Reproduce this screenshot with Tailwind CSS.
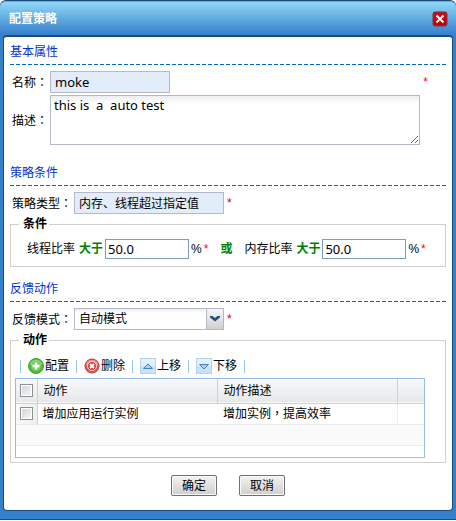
<!DOCTYPE html>
<html lang="zh-CN">
<head>
  <meta charset="UTF-8" />
  <meta name="viewport" content="width=device-width, initial-scale=1.0"/>
  <title>配置策略</title>
  <script src="https://cdn.jsdelivr.net/npm/@tailwindcss/browser@4"></script>
</head>
<body class="bg-white text-black text-xs leading-4 font-['Noto_Sans','Noto_Sans_CJK_SC',sans-serif]">

  <div class="bg-[#3580cb] border-y border-[#1a4b7c] rounded-t-md">
    <!-- Title bar -->
    <header class="flex items-center justify-between h-[34px] pl-[9px] pr-2 rounded-t-md border-t border-[#6fa9d8] bg-linear-to-b from-[#90d8f6] to-[#347fcb]">
      <h1 class="text-white font-bold">配置策略</h1>
      <button type="button" aria-label="关闭" class="block">
        <svg class="block" width="16" height="16" viewBox="0 0 16 16">
          <rect x="1" y="1" width="14" height="14" rx="2" fill="#d60610" stroke="#6a3f3c"/>
          <path d="M2 8h12v5a1.500 1.500 0 0 1-1 1H3a1.500 1.500 0 0 1-1-1z" fill="#c00008"/>
          <path d="M4.500 4.500l7 7M11.500 4.500l-7 7" stroke="#fff" stroke-width="2"/>
        </svg>
      </button>
    </header>

    <main class="mx-[3px] mb-2 px-1.5 pt-[7px] pb-3.5 bg-white border border-t-2 border-[#1a4b7c] rounded">
      <form>
        <!-- Basic properties -->
        <h2 class="text-[#0033cc] h-5">基本属性</h2>
        <div class="h-px bg-[repeating-linear-gradient(90deg,#0066c4_0_4px,transparent_4px_6px)]"></div>
        <div class="flex items-center mt-1.5 pl-0.5">
          <label for="name" class="w-[38px] shrink-0">名称<span lang="zh-TW" class="font-['Noto_Sans_CJK_TC',sans-serif]">：</span></label>
          <input id="name" type="text" value="moke" class="w-[120px] h-[22px] px-1 border border-[#b5b8c8] bg-[#e3edfa] text-[13px]">
          <span class="ml-auto mr-[18px] text-[#ff0033] font-['Liberation_Sans',sans-serif]">*</span>
        </div>
        <div class="flex items-center mt-0.5 pl-0.5 pr-[26px]">
          <label for="desc" class="w-[38px] shrink-0">描述<span lang="zh-TW" class="font-['Noto_Sans_CJK_TC',sans-serif]">：</span></label>
          <textarea id="desc" class="block flex-1 h-[50px] px-[3px] py-px border border-[#b5b8c8] bg-linear-to-b from-[#eceef0] to-white to-[8px] text-[13px] leading-4 resize">this is  a  auto test</textarea>
        </div>

        <!-- Policy condition -->
        <h2 class="mt-5 text-[#0033cc] h-5">策略条件</h2>
        <div class="h-px bg-[repeating-linear-gradient(90deg,#0066c4_0_4px,transparent_4px_6px)]"></div>
        <div class="flex items-center mt-1.5 pl-0.5">
          <label for="type" class="w-[62px] shrink-0">策略类型<span lang="zh-TW" class="font-['Noto_Sans_CJK_TC',sans-serif]">：</span></label>
          <input id="type" type="text" value="内存、线程超过指定值" class="w-[150px] h-[22px] px-1 border border-[#b5b8c8] bg-[#e3edfa]">
          <span class="ml-[3px] text-[#cc0033] font-['Liberation_Sans',sans-serif]">*</span>
        </div>
        <fieldset class="mt-0.5 px-4 pb-1.5 border border-[#d0d0d0]">
          <legend class="-ml-2 px-1 pr-0.5 font-bold">条件</legend>
          <div class="flex items-center h-[22px] mt-1.5 whitespace-nowrap">
            <label for="thread">线程比率</label>
            <b class="mx-1 mr-0.5 text-[#008000]">大于</b>
            <input id="thread" type="text" value="50.0" class="w-[84px] h-5 px-0.5 border border-[#7f9db9] text-[13px]">
            <span class="ml-0.5 font-['Liberation_Sans',sans-serif]">%</span><span class="ml-0.5 text-[#ff0033] font-['Liberation_Sans',sans-serif]">*</span>
            <b class="mx-3 text-[#008000]">或</b>
            <label for="memory">内存比率</label>
            <b class="mx-1 mr-0.5 text-[#008000]">大于</b>
            <input id="memory" type="text" value="50.0" class="w-[84px] h-5 px-0.5 border border-[#7f9db9] text-[13px]">
            <span class="ml-0.5 font-['Liberation_Sans',sans-serif]">%</span><span class="ml-0.5 text-[#ff0033] font-['Liberation_Sans',sans-serif]">*</span>
          </div>
        </fieldset>

        <!-- Feedback action -->
        <h2 class="mt-3.5 text-[#0033cc] h-5">反馈动作</h2>
        <div class="h-px bg-[repeating-linear-gradient(90deg,#0066c4_0_4px,transparent_4px_6px)]"></div>
        <div class="flex items-center mt-1.5 pl-0.5">
          <label for="mode" class="w-[62px] shrink-0">反馈模式<span lang="zh-TW" class="font-['Noto_Sans_CJK_TC',sans-serif]">：</span></label>
          <div class="relative">
            <select id="mode" class="block appearance-none w-[150px] h-[22px] px-1 border border-[#b5b8c8] bg-linear-to-b from-[#eceef0] to-white to-[4px]">
              <option>自动模式</option>
            </select>
            <svg class="absolute right-px top-px pointer-events-none" width="17" height="20" viewBox="0 0 17 20">
              <defs><linearGradient id="trigger" x2="0" y2="1"><stop offset="0" stop-color="#f6f6f6"/><stop offset="1" stop-color="#d0d0d0"/></linearGradient></defs>
              <rect width="17" height="20" fill="url(#trigger)"/>
              <path d="M.5 0v20" stroke="#b5b8c8"/>
              <path d="M4 7h2.500l2.500 2 2.500-2H14v1.500L9 12.500 4 8.500z" fill="#2b4c80"/>
            </svg>
          </div>
          <span class="ml-[3px] text-[#cc0033] font-['Liberation_Sans',sans-serif]">*</span>
        </div>
        <fieldset class="mt-0.5 pl-1 pr-5 pb-1 border border-[#d0d0d0]">
          <legend class="ml-1 pl-1 pr-0.5 font-bold">动作</legend>
          <!-- Toolbar -->
          <div class="flex items-center h-6 mt-1.5 pl-[5px] whitespace-nowrap">
            <span class="w-px h-[13px] bg-[#98c4f8]"></span>
            <button type="button" class="flex items-center w-[55px] pl-[7px]">
              <svg class="shrink-0 mr-px" width="16" height="16" viewBox="0 0 16 16">
                <circle cx="8" cy="8" r="7.500" fill="#55b93c" stroke="#45a030"/>
                <path d="M2 7a6 5 0 0 1 12 0z" fill="#92d77d"/>
                <circle cx="8" cy="8" r="5" fill="#7acc60"/>
                <path d="M8 4.500v7M4.500 8h7" stroke="#fff" stroke-width="2.500"/>
              </svg>配置</button>
            <span class="w-px h-[13px] bg-[#98c4f8]"></span>
            <button type="button" class="flex items-center w-[55px] pl-[7px]">
              <svg class="shrink-0 mr-px" width="16" height="16" viewBox="0 0 16 16">
                <circle cx="8" cy="8" r="7" fill="#e35b58" stroke="#b83a40"/>
                <path d="M2 7a6 5 0 0 1 12 0z" fill="#f19b98"/>
                <circle cx="8" cy="8" r="4.500" fill="#d83840" stroke="#fbd5d3"/>
                <path d="M6 6l4 4M10 6l-4 4" stroke="#fff" stroke-width="2"/>
              </svg>删除</button>
            <span class="w-px h-[13px] bg-[#98c4f8]"></span>
            <button type="button" class="flex items-center w-[55px] pl-[7px]">
              <svg class="shrink-0 mr-px" width="16" height="16" viewBox="0 0 16 16">
                <rect x=".5" y=".5" width="15" height="15" fill="#e4f1fd" stroke="#b4d3ee"/>
                <path d="M1 8h14v7H1z" fill="#c9e2f9"/>
                <path d="M3.500 10.500h9L8 6z" fill="#a8d0f4" stroke="#4f7fae"/>
              </svg>上移</button>
            <span class="w-px h-[13px] bg-[#98c4f8]"></span>
            <button type="button" class="flex items-center w-[55px] pl-[7px]">
              <svg class="shrink-0 mr-px" width="16" height="16" viewBox="0 0 16 16">
                <rect x=".5" y=".5" width="15" height="15" fill="#e4f1fd" stroke="#b4d3ee"/>
                <path d="M1 8h14v7H1z" fill="#c9e2f9"/>
                <path d="M3.500 6.500h9L8 11z" fill="#a8d0f4" stroke="#4f7fae"/>
              </svg>下移</button>
            <span class="w-px h-[13px] bg-[#98c4f8]"></span>
          </div>

          <!-- Action grid -->
          <div class="border border-[#99bbe8]">
            <table class="w-full table-fixed border-collapse text-left">
              <colgroup><col class="w-[21px]"><col class="w-[180px]"><col class="w-[180px]"><col></colgroup>
              <thead>
                <tr class="h-6 bg-linear-to-b from-[#f9f9f9] to-[#e6e8ea] border-b border-[#d0d0d0]">
                  <th class="border-r border-[#d0d0d0]"><input type="checkbox" aria-label="全选" class="block mx-auto appearance-none size-[13px] border border-[#8e8f8f] bg-linear-to-br from-[#cfd3d8] to-[#f8f8f8] outline outline-white -outline-offset-2"></th>
                  <th class="pl-1.5 font-normal border-r border-[#d0d0d0]">动作</th>
                  <th class="pl-1.5 font-normal border-r border-[#d0d0d0]">动作描述</th>
                  <th></th>
                </tr>
              </thead>
              <tbody>
                <tr class="h-[21px] border-b border-[#ededed]">
                  <td class="border-r border-[#d0d0d0] bg-linear-to-r from-[#fafafa] to-[#eeeeee]"><input type="checkbox" aria-label="选择" class="block mx-auto appearance-none size-[13px] border border-[#8e8f8f] bg-linear-to-br from-[#cfd3d8] to-[#f8f8f8] outline outline-white -outline-offset-2"></td>
                  <td class="pl-[5px]">增加应用运行实例</td>
                  <td class="pl-1.5 border-r border-[#ededed]">增加实例<span lang="zh-TW" class="font-['Noto_Sans_CJK_TC',sans-serif]">，</span>提高效率</td>
                  <td></td>
                </tr>
                <tr class="h-[21px] border-b border-[#ededed] bg-[#fafafa]"><td colspan="4"></td></tr>
                <tr class="h-3"><td colspan="4"></td></tr>
              </tbody>
            </table>
          </div>
        </fieldset>

        <div class="flex justify-center gap-[22px] mt-3">
          <button type="submit" class="w-[46px] h-[21px] border border-[#707070] rounded-xs bg-linear-to-b from-[#f3f3f3] to-[#cfcfcf] shadow-[inset_0_0_0_1px_#fafafa]">确定</button>
          <button type="button" class="w-[46px] h-[21px] border border-[#707070] rounded-xs bg-linear-to-b from-[#f3f3f3] to-[#cfcfcf] shadow-[inset_0_0_0_1px_#fafafa]">取消</button>
        </div>
      </form>
    </main>
  </div>

</body>
</html>
